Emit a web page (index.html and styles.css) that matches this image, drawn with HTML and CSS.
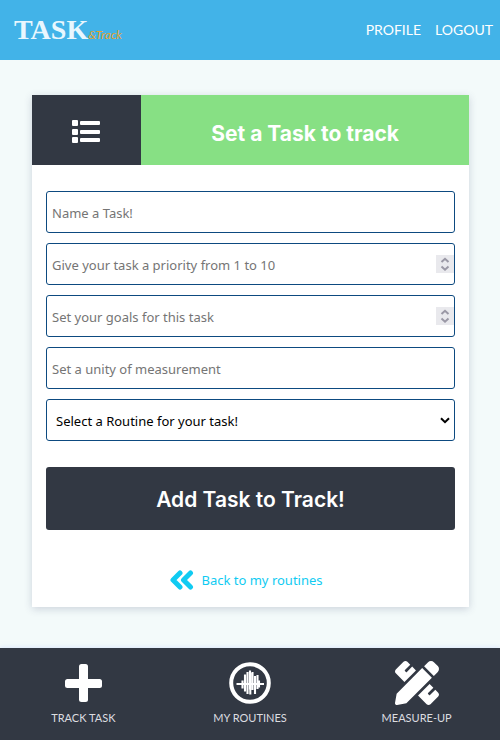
FILE: index.html
```html
<!DOCTYPE html>
<html lang="en">
<head>
<meta charset="utf-8">
<meta name="viewport" content="width=device-width, initial-scale=1">
<title>Task &amp; Track</title>
<link rel="stylesheet" href="styles.css">
</head>
<body>
<header class="topbar">
  <a class="logo" href="#"><span class="logo-main">TASK</span><span class="logo-sub">&amp;Track</span></a>
  <nav class="topnav">
    <a href="#">PROFILE</a>
    <a href="#">LOGOUT</a>
  </nav>
</header>

<main class="page">
  <section class="card">
    <div class="card-head">
      <div class="card-icon">
        <svg width="30" height="24" viewBox="0 0 30 24" fill="#fff" aria-hidden="true">
          <rect x="0" y="0" width="6" height="6" rx="1"/><rect x="8" y="1" width="20" height="4" rx="1"/>
          <rect x="0" y="9" width="6" height="6" rx="1"/><rect x="8" y="10" width="20" height="4" rx="1"/>
          <rect x="0" y="17" width="6" height="6" rx="1"/><rect x="8" y="18" width="20" height="4" rx="1"/>
        </svg>
      </div>
      <h1 class="card-title">Set a Task to track</h1>
    </div>
    <form class="form">
      <div class="field"><input class="control" type="text" aria-label="Task name" placeholder="Name a Task!"></div>
      <div class="field">
        <input class="control" type="number" min="1" max="10" aria-label="Priority" placeholder="Give your task a priority from 1 to 10">
        <svg class="spinner" width="18" height="18" viewBox="0 0 18 18" aria-hidden="true"><path d="M5.500 7 9 3.800 12.500 7M5.500 11.500 9 14.700 12.500 11.500"/></svg>
      </div>
      <div class="field">
        <input class="control" type="number" aria-label="Goals" placeholder="Set your goals for this task">
        <svg class="spinner" width="18" height="18" viewBox="0 0 18 18" aria-hidden="true"><path d="M5.500 7 9 3.800 12.500 7M5.500 11.500 9 14.700 12.500 11.500"/></svg>
      </div>
      <div class="field"><input class="control" type="text" aria-label="Unit of measurement" placeholder="Set a unity of measurement"></div>
      <div class="field">
        <select class="control select" aria-label="Routine"><option>Select a Routine for your task!</option></select>
        <svg class="chevron" width="10" height="7" viewBox="0 0 10 7" aria-hidden="true"><path d="M1 1.200 5 5.200 9 1.200"/></svg>
      </div>
      <button class="submit" type="submit">Add Task to Track!</button>
    </form>
    <a class="back" href="#">
      <svg width="24" height="20" viewBox="0 0 24 20" aria-hidden="true"><path d="M10 3 3 10l7 7M20.500 3l-7 7 7 7"/></svg>
      <span>Back to my routines</span>
    </a>
  </section>
</main>

<nav class="tabbar">
  <a class="tab" href="#">
    <svg width="44" height="44" viewBox="0 0 44 44" fill="#fff" aria-hidden="true"><rect x="18" y="3" width="9" height="38" rx="2.500"/><rect x="4" y="18" width="37" height="9" rx="2.500"/></svg>
    <span>TRACK TASK</span>
  </a>
  <a class="tab" href="#">
    <svg width="44" height="44" viewBox="0 0 44 44" fill="none" stroke="#fff" aria-hidden="true"><circle cx="22" cy="22" r="18.800" stroke-width="4"/><path stroke-width="2" d="M8.500 23H36"/><path stroke-width="2.100" d="M14.500 19.500v8M17 13.500v17M19.500 11v22M22 9.500v19M22.300 12v21.500M24.500 11v18M27 15v18M29.500 14v14M31 19.500v7"/></svg>
    <span>MY ROUTINES</span>
  </a>
  <a class="tab" href="#">
    <svg width="44" height="44" viewBox="0 0 512 512" fill="#fff" aria-hidden="true"><path d="M109.460 244.040l134.580-134.560-44.120-44.120-61.680 61.680a7.919 7.919 0 0 1-11.210 0l-11.210-11.210c-3.100-3.100-3.100-8.120 0-11.210l61.680-61.680-33.640-33.650C131.470-3.100 111.390-3.100 99 9.290L9.290 99c-12.380 12.390-12.390 32.470 0 44.860l100.170 100.180zm388.470-116.800c18.760-18.760 18.750-49.170 0-67.930l-45.250-45.250c-18.760-18.760-49.180-18.760-67.950 0l-46.020 46.010 113.200 113.200 46.020-46.030zM316.080 82.710l-297 296.960L.320 487.110c-2.530 14.490 10.090 27.110 24.590 24.560l107.450-18.840L429.280 195.900 316.080 82.710zm186.630 285.430l-33.640-33.640-61.680 61.680c-3.100 3.100-8.120 3.100-11.210 0l-11.210-11.210c-3.090-3.100-3.090-8.120 0-11.210l61.680-61.680-44.140-44.140L267.930 402.500l100.210 100.200c12.390 12.390 32.470 12.390 44.860 0l89.710-89.700c12.390-12.390 12.390-32.470 0-44.860z"/></svg>
    <span>MEASURE-UP</span>
  </a>
</nav>
</body>
</html>
```
FILE: styles.css
```css
* { box-sizing: border-box; }

body {
  margin: 0;
  min-height: 100vh;
  display: flex;
  flex-direction: column;
  background: #f3fafa;
  font-family: "Noto Sans", "Open Sans", sans-serif;
  font-size: 13px;
}

a { text-decoration: none; }

.topbar {
  display: flex;
  align-items: center;
  justify-content: space-between;
  height: 60px;
  padding: 0 7px 0 14px;
  background: #42b3e8;
}

.logo { display: flex; align-items: baseline; color: #e9f7fe; }
.logo-main { font: bold 28px/36px "Liberation Serif", serif; }
.logo-sub { font: italic 12px/16px Lato, sans-serif; color: #e5a32f; }

.topnav { display: flex; gap: 14px; }
.topnav a { font: 14px/20px Lato, sans-serif; color: #fff; }

.page { flex: 1; padding: 35px 31px 40px 32px; }

.card {
  display: flex;
  flex-direction: column;
  background: #fff;
  box-shadow: 0 2px 8px rgba(50, 56, 100, 0.2);
}

.card-head { display: grid; grid-template-columns: 1fr 3fr; height: 70px; }
.card-icon { display: flex; align-items: center; justify-content: center; padding-top: 4px; background: #323843; }
.card-title {
  display: flex;
  align-items: center;
  justify-content: center;
  margin: 0;
  padding-top: 8px;
  background: #87e084;
  color: #fff;
  font: 700 21px/28px Inter, sans-serif;
}

.form { display: flex; flex-direction: column; gap: 10px; padding: 26px 14px 0; }
.field { position: relative; display: flex; }
.control {
  width: 100%;
  height: 42px;
  margin: 0;
  padding: 1px 5px 0;
  border: 1px solid #0d4a80;
  border-radius: 3px;
  background: #fff;
  color: #000;
  font: inherit;
  appearance: none;
  -moz-appearance: textfield;
}
.control::placeholder { color: #757575; opacity: 1; }
.control::-webkit-inner-spin-button { appearance: none; margin: 0; }
.select { padding-left: 9px; }

.spinner {
  position: absolute;
  right: 1px;
  top: 12px;
  background: #e9e9ed;
  fill: none;
  stroke: #9a98a5;
  stroke-width: 2;
  pointer-events: none;
}
.chevron {
  position: absolute;
  right: 5px;
  top: 18px;
  fill: none;
  stroke: #000;
  stroke-width: 2;
  pointer-events: none;
}

.submit {
  height: 63px;
  margin: 16px 0 0;
  padding: 3px 0 0;
  border: 0;
  border-radius: 3px;
  background: #323843;
  color: #fff;
  font: 600 21px/28px Inter, sans-serif;
}

.back {
  display: flex;
  align-items: center;
  justify-content: center;
  gap: 7px;
  padding: 40px 8px 17px 0;
  color: #10cbf2;
  line-height: 20px;
}
.back svg { fill: none; stroke: #10cbf2; stroke-width: 5; stroke-linecap: round; stroke-linejoin: round; }

.tabbar {
  display: grid;
  grid-template-columns: repeat(3, 1fr);
  height: 92px;
  background: #323843;
  box-shadow: 0 -1px 4px rgba(200, 215, 255, 0.5);
}
.tab {
  display: flex;
  flex-direction: column;
  align-items: center;
  gap: 5px;
  padding-top: 13px;
  color: #dcdde0;
  font: 11px/16px Lato, sans-serif;
}
```
